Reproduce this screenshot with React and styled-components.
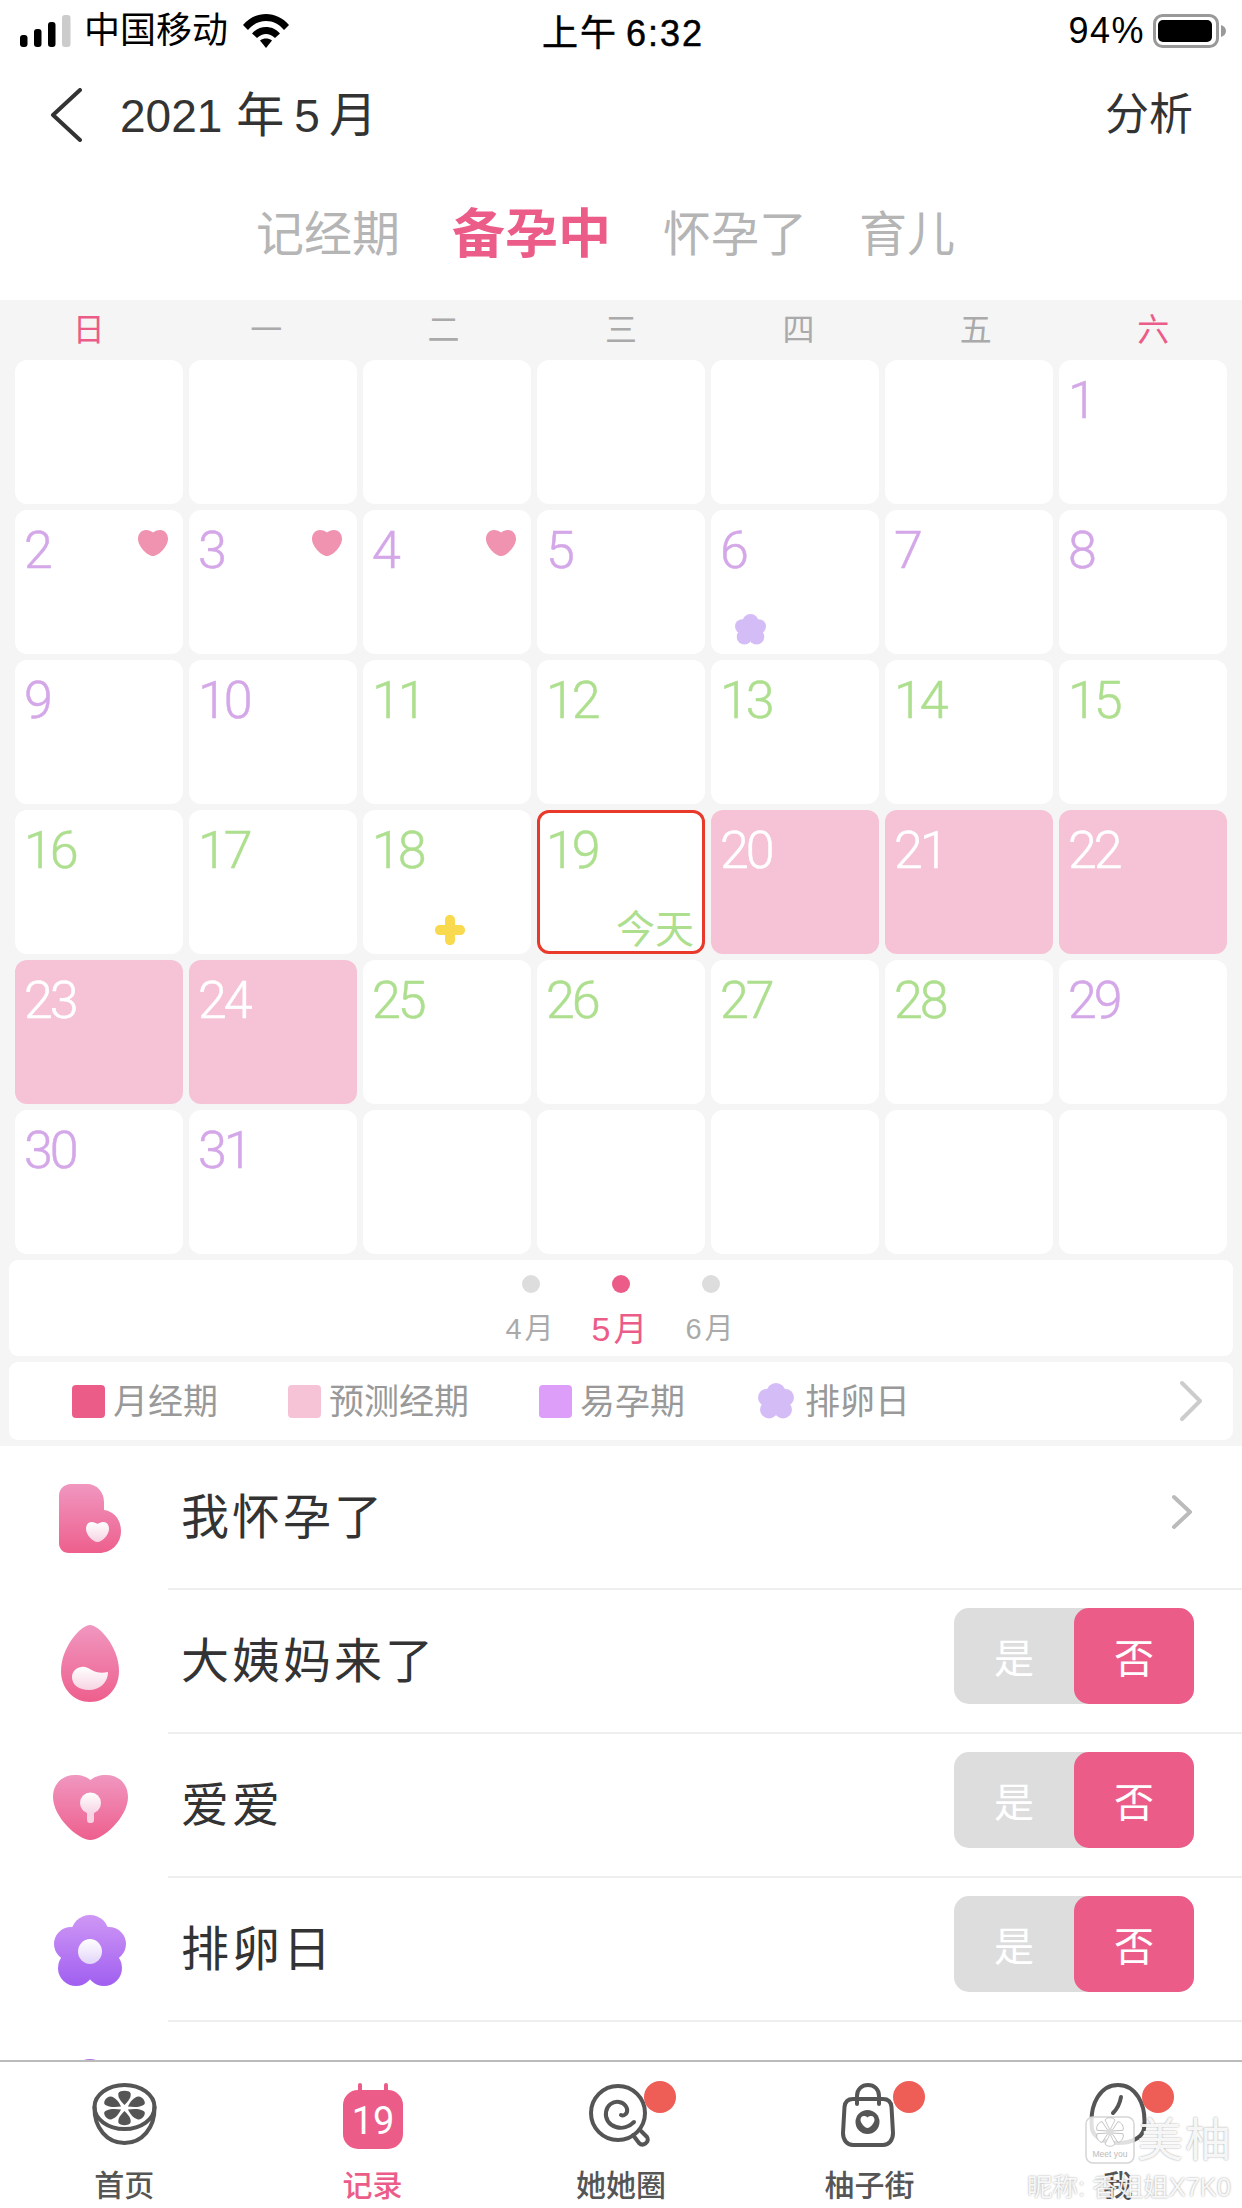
import React from "react";
import styled, { createGlobalStyle } from "styled-components";

const PINK = "#ec5c88";
const CJK = `"Liberation Sans", "Noto Sans CJK SC", sans-serif`;

const Global = createGlobalStyle`
  html, body { margin: 0; padding: 0; background: #fff; }
  * { box-sizing: border-box; }
`;

const Page = styled.div`
  position: relative;
  width: 1242px;
  height: 2208px;
  overflow: hidden;
  display: flex;
  flex-direction: column;
  background: #fff;
  font-family: ${CJK};
`;

/* status bar */
const StatusBar = styled.div`
  height: 62px;
  flex: none;
  display: grid;
  grid-template-columns: 1fr auto 1fr;
  align-items: center;
  color: #000;
  font-size: 36px;
  padding: 0 16px 0 20px;
`;
const StatusLeft = styled.div`
  display: flex;
  align-items: center;
`;
const Carrier = styled.span`
  margin: 0 15px 0 13px;
  line-height: 60px;
`;
const Time = styled.div`
  letter-spacing: 2px;
  word-spacing: -4px;
  margin-bottom: 3px;
  -webkit-text-stroke: 0.5px #000;
`;
const StatusRight = styled.div`
  display: flex;
  align-items: center;
  justify-content: flex-end;
  gap: 8px;
  letter-spacing: 1.5px;
`;

/* nav */
const NavBar = styled.div`
  height: 106px;
  flex: none;
  display: flex;
  align-items: center;
  padding: 0 49px 0 50px;
  color: #333;
`;
const Title = styled.div`
  margin: 0 0 8px 38px;
  font-size: 46px;
  flex: 1;
`;
const TitleUnit = styled.span`
  font-size: 48px;
  margin: 0 ${(p) => p.$after}px 0 ${(p) => p.$before}px;
`;
const NavAction = styled.div`
  font-size: 44px;
  margin-bottom: 8px;
`;

/* mode tabs */
const ModeTabs = styled.div`
  height: 132px;
  flex: none;
  display: flex;
  align-items: center;
  gap: 52px;
  padding: 0 0 8px 256px;
`;
const ModeTab = styled.div`
  font-size: ${(p) => (p.$active ? 53 : 48)}px;
  font-weight: ${(p) => (p.$active ? 700 : 400)};
  color: ${(p) => (p.$active ? PINK : "#b5b5b5")};
`;

/* calendar */
const CalendarArea = styled.div`
  height: 1146px;
  flex: none;
  background: #f5f5f5;
`;
const WeekHeader = styled.div`
  height: 60px;
  padding-bottom: 6px;
  display: grid;
  grid-template-columns: repeat(7, 1fr);
  align-items: center;
  text-align: center;
`;
const WeekDay = styled.div`
  font-size: 32px;
  color: ${(p) => (p.$weekend ? PINK : "#aaa")};
`;
const DayGrid = styled.div`
  display: grid;
  grid-template-columns: repeat(7, 168px);
  grid-auto-rows: 144px;
  gap: 6px;
  padding: 0 15px;
`;
const DayCell = styled.div`
  position: relative;
  border-radius: 12px;
  padding: 15px 0 0 9px;
  background: ${(p) => (p.$period ? "#f5c2d6" : "#fff")};
  border: ${(p) => (p.$today ? "3px solid #e8392a" : "none")};
`;
const DayNumber = styled.div`
  font-family: Roboto, sans-serif;
  font-weight: 300;
  font-size: 52px;
  line-height: 51px;
  letter-spacing: -3px;
  -webkit-text-stroke: 0.5px ${(p) => p.$color};
  margin: ${(p) => (p.$today ? "-3px 0 0 -3px" : "0")};
  color: ${(p) => p.$color};
`;
const CellMark = styled.svg`
  position: absolute;
  ${(p) => p.$place}
`;
const TodayTag = styled.div`
  position: absolute;
  right: 8px;
  bottom: -1px;
  font-size: 39px;
  line-height: 44px;
  color: #addf8e;
`;

const MonthCard = styled.div`
  height: 96px;
  margin: 6px 9px 0;
  background: #fff;
  border-radius: 9px;
  display: flex;
  justify-content: center;
`;
const MonthCol = styled.div`
  width: 90px;
  padding-top: 15px;
  display: flex;
  flex-direction: column;
  align-items: center;
`;
const MonthDot = styled.div`
  width: 18px;
  height: 18px;
  border-radius: 50%;
  background: ${(p) => (p.$active ? PINK : "#ddd")};
`;
const MonthLabel = styled.div`
  margin-top: 18px;
  line-height: 36px;
  letter-spacing: 3px;
  font-size: ${(p) => (p.$active ? 34 : 29)}px;
  color: ${(p) => (p.$active ? PINK : "#aaa")};
  white-space: nowrap;
`;

const LegendCard = styled.div`
  height: 78px;
  margin: 6px 9px 0;
  background: #fff;
  border-radius: 9px;
  display: flex;
  align-items: center;
  gap: 70px;
  padding: 0 29px 0 63px;
`;
const LegendItem = styled.div`
  display: flex;
  align-items: center;
  gap: ${(p) => p.$gap || 8}px;
  margin-left: ${(p) => p.$offset || 0}px;
`;
const LegendText = styled.span`
  font-size: 35px;
  color: #999;
  margin-bottom: 5px;
`;
const Swatch = styled.div`
  width: 33px;
  height: 33px;
  border-radius: 4px;
  background: ${(p) => p.$color};
`;
const LegendMore = styled.div`
  margin-left: auto;
  display: flex;
`;

/* list */
const List = styled.div`
  flex: 1;
  min-height: 0;
  overflow: hidden;
`;
const Row = styled.div`
  height: 144px;
  display: flex;
`;
const IconSlot = styled.div`
  width: 168px;
  flex: none;
  padding-left: 12px;
  display: flex;
  align-items: center;
  justify-content: center;
  & > svg {
    margin-top: ${(p) => p.$shift || 0}px;
  }
`;
const RowBody = styled.div`
  flex: 1;
  display: flex;
  align-items: center;
  justify-content: space-between;
  padding: 0 48px 10px 13px;
  border-bottom: 2px solid #eee;
`;
const RowLabel = styled.div`
  margin-top: 2px;
  font-size: 48px;
  letter-spacing: 3px;
  color: #333;
`;
const Toggle = styled.div`
  width: 240px;
  height: 96px;
  display: flex;
  border-radius: 15px;
  background: #ddd;
`;
const ToggleSide = styled.div`
  width: 120px;
  display: flex;
  align-items: center;
  justify-content: center;
  font-size: 40px;
  color: #fff;
  border-radius: 15px;
  background: ${(p) => (p.$on ? PINK : "transparent")};
`;

/* tab bar */
const TabBar = styled.div`
  height: 148px;
  flex: none;
  display: grid;
  grid-template-columns: repeat(5, 1fr);
  background: #fff;
  border-top: 2px solid #bbb;
`;
const Tab = styled.div`
  display: flex;
  flex-direction: column;
  align-items: center;
`;
const TabIconBox = styled.div`
  position: relative;
  height: 87px;
  padding-top: 21px;
  display: flex;
  justify-content: center;
  transform: translateX(${(p) => p.$dx || 0}px);
`;
const Badge = styled.div`
  position: absolute;
  top: 19px;
  left: ${(p) => p.$left}px;
  width: 32px;
  height: 32px;
  border-radius: 50%;
  background: #ee5d56;
`;
const TabLabel = styled.div`
  margin-top: 15px;
  font-size: 30px;
  font-weight: 500;
  line-height: 38px;
  font-family: "Noto Sans CJK SC", sans-serif;
  color: ${(p) => (p.$active ? PINK : "#555")};
`;

/* watermark */
const Watermark = styled.div`
  position: absolute;
  left: 1027px;
  top: 2116px;
  width: 210px;
  height: 84px;
`;
const WmLogo = styled.div`
  position: absolute;
  left: 58px;
  top: 0;
`;
const WmBrand = styled.div`
  position: absolute;
  left: 110px;
  top: 1px;
  font-size: 46px;
  line-height: 46px;
  letter-spacing: 2px;
  color: rgba(255, 255, 255, 0.92);
  text-shadow: 0 0 2px rgba(0, 0, 0, 0.4);
  white-space: nowrap;
`;
const WmUser = styled.div`
  position: absolute;
  left: 0;
  top: 56px;
  font-size: 25.500px;
  line-height: 30px;
  color: rgba(255, 255, 255, 0.92);
  text-shadow: 0 0 2px rgba(0, 0, 0, 0.4);
  white-space: nowrap;
`;

const Chevron = ({ w, h, color, sw = 4 }) => (
  <svg width={w} height={h} viewBox={`0 0 ${w} ${h}`} fill="none" stroke={color} strokeWidth={sw} strokeLinecap="round" strokeLinejoin="round">
    <path d={`M${sw} ${sw} L${w - sw} ${h / 2} L${sw} ${h - sw}`} />
  </svg>
);

const Signal = () => (
  <svg width="51" height="32" viewBox="0 0 51 32">
    <rect x="0" y="20" width="7.5" height="12" rx="3" fill="#000" />
    <rect x="14" y="14" width="7.5" height="18" rx="3" fill="#000" />
    <rect x="28" y="7" width="7.5" height="25" rx="3" fill="#000" />
    <rect x="42" y="0" width="8.5" height="32" rx="3" fill="#ccc" />
  </svg>
);

const Wifi = () => (
  <svg width="46" height="34" viewBox="0 0 46 34">
    <path d="M0 11C6 4 14 0 23 0C32 0 40 4 46 11L41 16C36 10 30 7 23 7C16 7 10 10 5 16Z" fill="#000" />
    <path d="M9 19.500C13 15 18 13 23 13C28 13 33 15 37 19.500L32 24C29 21.500 26 20 23 20C20 20 17 21.500 14 24Z" fill="#000" />
    <path d="M17 26.500C19 25 21 24.500 23 24.500C25 24.500 27 25 29 26.500L23 34Z" fill="#000" />
  </svg>
);

const Battery = () => (
  <svg width="73" height="34" viewBox="0 0 73 34">
    <rect x="1.500" y="1.500" width="63" height="31" rx="8" fill="none" stroke="#999" strokeWidth="3" />
    <rect x="5" y="6" width="54" height="22" rx="5" fill="#000" />
    <path d="M68 11C71 12 73 14 73 17C73 20 71 22 68 23Z" fill="#999" />
  </svg>
);

const Grad = ({ id, from, to }) => (
  <linearGradient id={id} x1="0" y1="0" x2="0" y2="1">
    <stop offset="0" stopColor={from} />
    <stop offset="1" stopColor={to} />
  </linearGradient>
);

const PregnantIcon = () => (
  <svg width="62" height="69" viewBox="0 0 62 69">
    <defs>
      <Grad id="ga" from="#f097c0" to="#ee5f8d" />
      <Grad id="gw" from="#ffffff" to="#f6d4e2" />
    </defs>
    <path d="M12 0H28C38 0 45 8 45 18V26C55 27 62 36 62 47C62 60 52 69 40 69H10C4 69 0 65 0 59V12C0 5 5 0 12 0Z" fill="url(#ga)" />
    <path d="M33 38C35 38 37 39 38.500 40C40 39 42 38 44 38C48 38 50 41 50 45C50 51 43 58 38.500 58C34 58 27 51 27 45C27 41 29 38 33 38Z" fill="url(#gw)" />
  </svg>
);

const DropIcon = () => (
  <svg width="58" height="77" viewBox="0 0 58 77">
    <path d="M29 0C38 0 58 22 58 46C58 64 45 77 29 77C13 77 0 64 0 46C0 22 20 0 29 0Z" fill="url(#ga)" />
    <path d="M11 52C11 45 18 41 24 42C30 43 34 50 47 47C47 58 38 65 28 65C18 65 11 60 11 52Z" fill="url(#gw)" />
  </svg>
);

const HeartIcon = () => (
  <svg width="75" height="65" viewBox="0 0 75 65">
    <path d="M22 0C29 0 34 2 37.500 5C41 2 46 0 53 0C66 0 75 9 75 22C75 42 50 65 37.500 65C25 65 0 42 0 22C0 9 9 0 22 0Z" fill="url(#ga)" />
    <rect x="34" y="30" width="7" height="18" rx="3" fill="#f6d4e2" />
    <circle cx="37.500" cy="28" r="10.500" fill="url(#gw)" />
  </svg>
);

const Petals = ({ fill }) => (
  <g fill={fill}>
    <circle cx="36" cy="19" r="19" />
    <circle cx="17" cy="29" r="17" />
    <circle cx="55" cy="29" r="17" />
    <circle cx="22" cy="53" r="18" />
    <circle cx="50" cy="53" r="18" />
    <circle cx="36" cy="38" r="20" />
  </g>
);

const FlowerIcon = () => (
  <svg width="72" height="71" viewBox="0 0 72 71">
    <defs>
      <linearGradient id="gp" gradientUnits="userSpaceOnUse" x1="0" y1="0" x2="0" y2="71">
        <stop offset="0" stopColor="#cf97f5" />
        <stop offset="1" stopColor="#a05ff0" />
      </linearGradient>
      <Grad id="gpw" from="#ffffff" to="#e2d4f8" />
    </defs>
    <Petals fill="url(#gp)" />
    <ellipse cx="36" cy="36.500" rx="12" ry="12.500" fill="url(#gpw)" />
  </svg>
);

const LastIcon = () => (
  <svg width="72" height="71" viewBox="0 0 72 71">
    <Petals fill="#b070e8" />
  </svg>
);

const HeartMark = () => (
  <CellMark $place="right: 15px; top: 20px;" width="30" height="26" viewBox="0 0 30 26">
    <path d="M8 0C11 0 13 1 15 2.500C17 1 19 0 22 0C27 0 30 4 30 9C30 16 21 26 15 26C9 26 0 16 0 9C0 4 3 0 8 0Z" fill="#f093b0" />
  </CellMark>
);

const FlowerMark = () => (
  <CellMark $place="left: 24px; bottom: 9px;" width="31" height="31" viewBox="0 0 72 72">
    <Petals fill="#d4bdf7" />
  </CellMark>
);

const PlusMark = () => (
  <CellMark $place="left: 72px; bottom: 9px;" width="30" height="30" viewBox="0 0 30 30">
    <path d="M15 0C18 0 20 2 20 5V10H25C28 10 30 12 30 15C30 18 28 20 25 20H20V25C20 28 18 30 15 30C12 30 10 28 10 25V20H5C2 20 0 18 0 15C0 12 2 10 5 10H10V5C10 2 12 0 15 0Z" fill="#f9d94e" />
  </CellMark>
);

const stroke = { fill: "none", stroke: "#555", strokeWidth: 4, strokeLinecap: "round", strokeLinejoin: "round" };

const HomeIcon = () => (
  <svg width="65" height="62" viewBox="0 0 65 62">
    <g {...stroke}>
      <ellipse cx="32.500" cy="24" rx="30" ry="22" />
      <path d="M2.500 24C2 45 15 60 32.500 60C50 60 63 45 62.500 24" />
    </g>
    <g fill="#555" transform="translate(32.500 25) scale(1 0.78)">
      {[0, 60, 120, 180, 240, 300].map((a) => (
        <path key={a} transform={`rotate(${a})`} d="M0 -4C-4 -9 -7 -14 -6 -19C-5 -23 5 -23 6 -19C7 -14 4 -9 0 -4Z" />
      ))}
    </g>
  </svg>
);

const CalendarIcon = () => (
  <svg width="60" height="66" viewBox="0 0 60 66">
    <path d="M17 2V10M43 2V10" stroke={PINK} strokeWidth="4" strokeLinecap="round" />
    <rect x="0" y="7" width="60" height="59" rx="15" fill={PINK} />
    <text x="30" y="51" textAnchor="middle" fontFamily="Roboto, sans-serif" fontSize="38" fontWeight="400" fill="#fff">19</text>
  </svg>
);

const LollipopIcon = () => (
  <svg width="62" height="64" viewBox="0 0 62 64">
    <g {...stroke}>
      <circle cx="29" cy="30" r="27" />
      <path d="M45 39C40 44 33 46 27 44C20 42 16 36 17 29C18 22 24 18 30 19C36 20 39 25 38 29C37 32 34 33 32 32" />
      <path d="M44 52L50 60C54 64 61 59 58 54L52 48" />
    </g>
  </svg>
);

const BagIcon = () => (
  <svg width="54" height="64" viewBox="0 0 54 64">
    <g {...stroke}>
      <path d="M16 21V13C16 6 21 2 27 2C33 2 38 6 38 13V21" />
      <path d="M12 16H42C47 16 50 19 50.500 24L52 50C52 57 48 62 42 62H12C6 62 2 57 2 50L3.500 24C4 19 7 16 12 16Z" />
    </g>
    <circle cx="26.500" cy="39" r="12" fill="#555" />
    <path d="M23 33C24.500 33 25.500 33.500 26.500 34.500C27.500 33.500 28.500 33 30 33C32.500 33 33.500 35 33.500 37C33.500 40 29 45 26.500 45C24 45 19.500 40 19.500 37C19.500 35 20.500 33 23 33Z" fill="#fff" />
  </svg>
);

const MeIcon = () => (
  <svg width="58" height="62" viewBox="0 0 58 62">
    <g {...stroke}>
      <path d="M3 46C0 20 12 2 29 2C46 2 58 20 55 46C53 55 42 60 29 60C16 60 5 55 3 46Z" />
      <path d="M24 30C28 26 31 20 32 14" />
    </g>
  </svg>
);

const WatermarkLogo = () => (
  <svg width="50" height="48" viewBox="0 0 50 48">
    <rect x="1" y="1" width="48" height="46" rx="7" fill="rgba(255,255,255,0.82)" stroke="#d5d5d5" strokeWidth="1.500" />
    <g transform="translate(25 16)">
      {[0, 60, 120, 180, 240, 300].map((a) => (
        <path key={a} transform={`rotate(${a})`} d="M0 -2L-5 -12C-3 -15 3 -15 5 -12Z" fill="#fff" stroke="#bbb" strokeWidth="0.800" />
      ))}
      <circle r="3.500" fill="#ddd" />
    </g>
    <text x="25" y="41" textAnchor="middle" fontFamily="Liberation Sans, sans-serif" fontSize="8.500" fill="#bbb">Meet you</text>
  </svg>
);

const PURPLE = "#d4a7e8";
const GREEN = "#addf8e";
const blanksStart = 6;
const dayColor = (d) => (d <= 10 || d >= 29 ? PURPLE : GREEN);
const isPeriod = (d) => d >= 20 && d <= 24;
const marks = { 2: <HeartMark />, 3: <HeartMark />, 4: <HeartMark />, 6: <FlowerMark />, 18: <PlusMark /> };

const cells = [
  ...Array.from({ length: blanksStart }, () => null),
  ...Array.from({ length: 31 }, (_, i) => i + 1),
  ...Array.from({ length: 5 }, () => null),
];

const weekDays = ["日", "一", "二", "三", "四", "五", "六"];

const rows = [
  { label: "我怀孕了", icon: <PregnantIcon />, shift: 0, arrow: true },
  { label: "大姨妈来了", icon: <DropIcon />, shift: 2 },
  { label: "爱爱", icon: <HeartIcon />, shift: 3 },
  { label: "排卵日", icon: <FlowerIcon />, shift: 0 },
];

const tabs = [
  { label: "首页", icon: <HomeIcon /> },
  { label: "记录", icon: <CalendarIcon />, active: true },
  { label: "她她圈", icon: <LollipopIcon />, badge: 55, dx: -1 },
  { label: "柚子街", icon: <BagIcon />, badge: 52, dx: -1 },
  { label: "我", icon: <MeIcon />, badge: 53 },
];

export default function App() {
  return (
    <Page>
      <Global />
      <StatusBar>
        <StatusLeft>
          <Signal />
          <Carrier>中国移动</Carrier>
          <Wifi />
        </StatusLeft>
        <Time>上午 6:32</Time>
        <StatusRight>
          <span>94%</span>
          <Battery />
        </StatusRight>
      </StatusBar>

      <NavBar>
        <svg width="32" height="54" viewBox="0 0 32 54" fill="none" stroke="#333" strokeWidth="4" strokeLinecap="round" strokeLinejoin="round">
          <path d="M30 2L3 27L30 52" />
        </svg>
        <Title>
          2021<TitleUnit $before={14} $after={10}>年</TitleUnit>5<TitleUnit $before={9} $after={0}>月</TitleUnit>
        </Title>
        <NavAction>分析</NavAction>
      </NavBar>

      <ModeTabs>
        <ModeTab>记经期</ModeTab>
        <ModeTab $active>备孕中</ModeTab>
        <ModeTab>怀孕了</ModeTab>
        <ModeTab>育儿</ModeTab>
      </ModeTabs>

      <CalendarArea>
        <WeekHeader>
          {weekDays.map((d, i) => (
            <WeekDay key={d} $weekend={i === 0 || i === 6}>{d}</WeekDay>
          ))}
        </WeekHeader>
        <DayGrid>
          {cells.map((d, i) => (
            <DayCell key={i} $period={d && isPeriod(d)} $today={d === 19}>
              {d && (
                <DayNumber $today={d === 19} $color={isPeriod(d) ? "#fff" : dayColor(d)}>{d}</DayNumber>
              )}
              {d && marks[d]}
              {d === 19 && <TodayTag>今天</TodayTag>}
            </DayCell>
          ))}
        </DayGrid>
        <MonthCard>
          <MonthCol>
            <MonthDot />
            <MonthLabel>4月</MonthLabel>
          </MonthCol>
          <MonthCol>
            <MonthDot $active />
            <MonthLabel $active>5月</MonthLabel>
          </MonthCol>
          <MonthCol>
            <MonthDot />
            <MonthLabel>6月</MonthLabel>
          </MonthCol>
        </MonthCard>
        <LegendCard>
          <LegendItem><Swatch $color={PINK} /><LegendText>月经期</LegendText></LegendItem>
          <LegendItem><Swatch $color="#f5c2d6" /><LegendText>预测经期</LegendText></LegendItem>
          <LegendItem><Swatch $color="#dc9ef8" /><LegendText>易孕期</LegendText></LegendItem>
          <LegendItem $offset={3} $gap={11}>
            <svg width="36" height="36" viewBox="0 0 72 72">
              <Petals fill="#d4bdf7" />
            </svg>
            <LegendText>排卵日</LegendText>
          </LegendItem>
          <LegendMore><Chevron w={26} h={44} color="#ccc" /></LegendMore>
        </LegendCard>
      </CalendarArea>

      <List>
        {rows.map((r) => (
          <Row key={r.label}>
            <IconSlot $shift={r.shift}>{r.icon}</IconSlot>
            <RowBody>
              <RowLabel>{r.label}</RowLabel>
              {r.arrow ? (
                <Chevron w={24} h={38} color="#bbb" />
              ) : (
                <Toggle>
                  <ToggleSide>是</ToggleSide>
                  <ToggleSide $on>否</ToggleSide>
                </Toggle>
              )}
            </RowBody>
          </Row>
        ))}
        <Row>
          <IconSlot $shift={1}>
            <LastIcon />
          </IconSlot>
        </Row>
      </List>

      <TabBar>
        {tabs.map((t) => (
          <Tab key={t.label}>
            <TabIconBox $dx={t.dx}>
              {t.icon}
              {t.badge && <Badge $left={t.badge} />}
            </TabIconBox>
            <TabLabel $active={t.active}>{t.label}</TabLabel>
          </Tab>
        ))}
      </TabBar>

      <Watermark>
        <WmLogo><WatermarkLogo /></WmLogo>
        <WmBrand>美柚</WmBrand>
        <WmUser>昵称: 香姐姐X7K0</WmUser>
      </Watermark>
    </Page>
  );
}
